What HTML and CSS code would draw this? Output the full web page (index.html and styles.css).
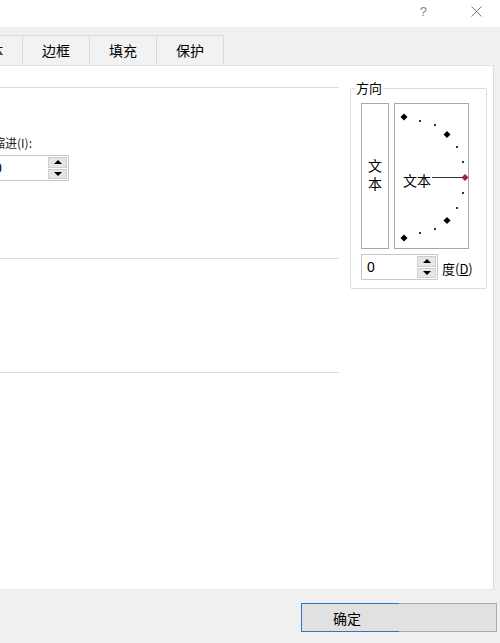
FILE: index.html
```html
<!DOCTYPE html>
<html lang="zh-CN">
<head>
    <meta charset="UTF-8">
    <meta name="viewport" content="width=device-width, initial-scale=1.0">
    <title>设置单元格格式</title>
    <link rel="stylesheet" href="styles.css">
</head>
<body>
    <div class="titlebar">
        <span class="help">?</span>
        <svg class="close" width="11" height="11" viewBox="0 0 11 11">
            <path d="M0.5 0.5 L10.5 10.5 M10.5 0.5 L0.5 10.5" stroke="#7a7a7a" stroke-width="1" fill="none"/>
        </svg>
    </div>

    <div class="tabstrip">
        <div class="tab tab-cut">字体</div>
        <div class="tab">边框</div>
        <div class="tab">填充</div>
        <div class="tab">保护</div>
    </div>

    <div class="panel">
        <div class="left-col">
            <div class="group group-align">
                <div class="indent-label">缩进(I):</div>
                <div class="spinner spinner-indent">
                    <div class="spin-input">0</div>
                    <div class="spin-btns">
                        <span class="spin-up"></span>
                        <span class="spin-down"></span>
                    </div>
                </div>
            </div>
            <div class="group group-control"></div>
            <div class="group group-dir"></div>
        </div>

        <div class="orient">
            <span class="orient-title">方向</span>
            <div class="orient-boxes">
                <div class="vtext"><span>文本</span></div>
                <svg class="dial" width="75" height="146" viewBox="0 0 75 146">
                    <rect x="0.5" y="0.5" width="74" height="145" fill="#fff" stroke="#a9a9a9"/>
                    <!-- big marks at 90 / 45 / -45 / -90 -->
                    <path d="M10 10.5 L13.5 14 L10 17.5 L6.5 14 Z" fill="#000"/>
                    <path d="M53 28 L56.5 31.5 L53 35 L49.5 31.5 Z" fill="#000"/>
                    <path d="M53 114 L56.5 117.5 L53 121 L49.5 117.5 Z" fill="#000"/>
                    <path d="M10 131.5 L13.5 135 L10 138.5 L6.5 135 Z" fill="#000"/>
                    <!-- small marks -->
                    <rect x="25" y="17" width="2" height="2" fill="#333"/>
                    <rect x="40" y="21" width="2" height="2" fill="#333"/>
                    <rect x="62" y="43" width="2" height="2" fill="#333"/>
                    <rect x="68" y="58" width="2" height="2" fill="#333"/>
                    <rect x="68" y="89" width="2" height="2" fill="#333"/>
                    <rect x="62" y="104" width="2" height="2" fill="#333"/>
                    <rect x="40" y="125" width="2" height="2" fill="#333"/>
                    <rect x="25" y="129" width="2" height="2" fill="#333"/>
                    <line x1="38" y1="74.5" x2="68" y2="74.5" stroke="#333" stroke-width="1"/>
                    <path d="M71 71 L74.5 74.5 L71 78 L67.5 74.5 Z" fill="#a3233b"/>
                    <text x="9" y="83" class="dial-text">文本</text>
                </svg>
            </div>
            <div class="degree-row">
                <div class="spinner spinner-deg">
                    <div class="spin-input">0</div>
                    <div class="spin-btns">
                        <span class="spin-up"></span>
                        <span class="spin-down"></span>
                    </div>
                </div>
                <span class="degree-label">度(<u>D</u>)</span>
            </div>
        </div>
    </div>

    <div class="footer">
        <button class="ok-btn">确定</button>
    </div>
</body>
</html>
```

FILE: styles.css
```css
body {
    margin: 0;
    width: 500px;
    height: 643px;
    overflow: hidden;
    font-family: "Noto Sans CJK SC", "Noto Sans", sans-serif;
    font-size: 14px;
    color: #000;
    background-color: #f0f0f0;
}

/* title bar */
.titlebar {
    height: 27px;
    background-color: #fff;
    display: flex;
    align-items: center;
    justify-content: flex-end;
}
.help {
    color: #8a8a8a;
    font-family: "Liberation Sans", sans-serif;
    font-size: 13px;
    margin-right: 44px;
    margin-top: -5px;
}
.close {
    margin-right: 18px;
    margin-top: -5px;
}

/* tabs */
.tabstrip {
    height: 38px;
    background-color: #f0f0f0;
    display: flex;
    align-items: flex-end;
    overflow: hidden;
}
.tab {
    width: 66px;
    height: 27px;
    border: 1px solid #dadada;
    border-bottom: none;
    margin-right: -1px;
    background-color: #f2f2f2;
    display: flex;
    align-items: center;
    justify-content: center;
    line-height: 1;
    padding-bottom: 2px;
}
.tab-cut {
    margin-left: -45px;
}

/* main white panel */
.panel {
    height: 523px;
    width: 493px;
    background-color: #fff;
    border-top: 1px solid #e3e3e3;
    border-right: 1px solid #dcdcdc;
    border-bottom: 1px solid #e6e6e6;
    display: flex;
    overflow: hidden;
}
.left-col {
    flex: none;
    width: 389px;
    margin-left: -50px;
    padding-top: 21px;
}
.group {
    border-top: 1px solid #dcdcdc;
}
.group-align {
    height: 170px;
}
.group-control {
    height: 113px;
}
.indent-label {
    margin-top: 48px;
    padding-left: 43px;
    font-size: 12px;
    line-height: 14px;
    color: #222;
}
.spinner-indent {
    margin-top: 5px;
    margin-left: 38px;
    width: 81px;
}

/* spinner */
.spinner {
    height: 26px;
    display: flex;
    border: 1px solid #c8c8c8;
    box-sizing: border-box;
    background-color: #fff;
}
.spin-input {
    flex: 1;
    padding-left: 5px;
    line-height: 24px;
    font-family: "Liberation Sans", sans-serif;
    font-size: 14px;
}
.spin-btns {
    width: 19px;
    display: flex;
    flex-direction: column;
    gap: 1px;
    padding: 1px;
    background-color: #fff;
}
.spin-up,
.spin-down {
    flex: 1;
    background-color: #e6e6e6;
    border: 1px solid #cfcfcf;
    display: flex;
    align-items: center;
    justify-content: center;
}
.spin-up::after {
    content: "";
    border-left: 4px solid transparent;
    border-right: 4px solid transparent;
    border-bottom: 4px solid #000;
}
.spin-down::after {
    content: "";
    border-left: 4px solid transparent;
    border-right: 4px solid transparent;
    border-top: 4px solid #000;
}

/* orientation group */
.orient {
    flex: none;
    margin-left: 11px;
    margin-top: 22px;
    width: 137px;
    height: 201px;
    box-sizing: border-box;
    border: 1px solid #dcdcdc;
    border-radius: 2px;
    position: relative;
    padding: 14px 0 0 10px;
}
.orient-title {
    position: absolute;
    top: -9px;
    left: 4px;
    padding: 0 1px;
    background-color: #fff;
    font-size: 13px;
    line-height: 16px;
}
.orient-boxes {
    display: flex;
    gap: 5px;
}
.vtext {
    width: 28px;
    height: 146px;
    box-sizing: border-box;
    border: 1px solid #a9a9a9;
    display: flex;
    align-items: center;
    justify-content: center;
    padding-bottom: 2px;
}
.vtext span {
    writing-mode: vertical-rl;
    text-orientation: upright;
    letter-spacing: 4px;
    line-height: 16px;
    margin-bottom: -4px;
}
.dial {
    display: block;
}
.dial-text {
    font-family: "Noto Sans CJK SC", sans-serif;
    font-size: 14px;
    fill: #000;
}
.degree-row {
    margin-top: 5px;
    display: flex;
    align-items: center;
}
.spinner-deg {
    width: 77px;
}
.degree-label {
    margin-left: 4px;
    font-size: 13px;
    padding-top: 2px;
}

/* footer */
.footer {
    height: 53px;
    display: flex;
    justify-content: flex-end;
    align-items: flex-start;
    padding-right: 3px;
}
.ok-btn {
    margin-top: 13px;
    width: 196px;
    height: 29px;
    background-color: #e1e1e1;
    border: 1px solid #adadad;
    font-family: "Noto Sans CJK SC", sans-serif;
    font-size: 14px;
    text-align: left;
    padding: 0 0 0 31px;
    position: relative;
}
.ok-btn::before {
    content: "";
    position: absolute;
    left: -1px;
    top: -1px;
    bottom: -1px;
    width: 97px;
    border: 1px solid #2b78c6;
    border-right: none;
}
```
